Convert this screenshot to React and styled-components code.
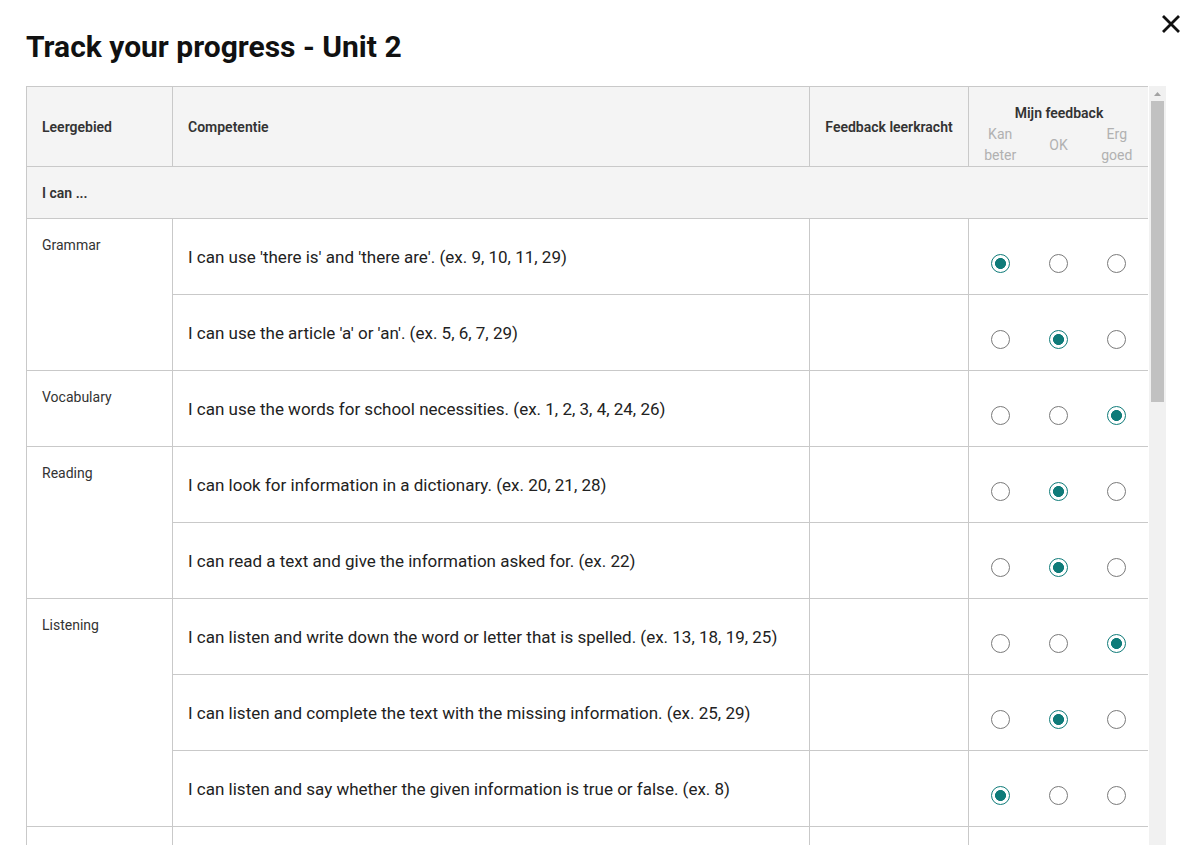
import React from 'react';
import styled, { createGlobalStyle } from 'styled-components';

const GlobalStyle = createGlobalStyle`
  html, body {
    margin: 0;
    padding: 0;
    background: #fff;
    overflow: hidden;
  }
  body {
    font-family: Roboto, "Noto Sans", Arial, sans-serif;
    color: #222;
  }
`;

const groups = [
  {
    area: 'Grammar',
    items: [
      { text: "I can use 'there is' and 'there are'. (ex. 9, 10, 11, 29)", value: 0 },
      { text: "I can use the article 'a' or 'an'. (ex. 5, 6, 7, 29)", value: 1 },
    ],
  },
  {
    area: 'Vocabulary',
    items: [{ text: 'I can use the words for school necessities. (ex. 1, 2, 3, 4, 24, 26)', value: 2 }],
  },
  {
    area: 'Reading',
    items: [
      { text: 'I can look for information in a dictionary. (ex. 20, 21, 28)', value: 1 },
      { text: 'I can read a text and give the information asked for. (ex. 22)', value: 1 },
    ],
  },
  {
    area: 'Listening',
    items: [
      { text: 'I can listen and write down the word or letter that is spelled. (ex. 13, 18, 19, 25)', value: 2 },
      { text: 'I can listen and complete the text with the missing information. (ex. 25, 29)', value: 1 },
      { text: 'I can listen and say whether the given information is true or false. (ex. 8)', value: 0 },
    ],
  },
  {
    area: 'Speaking',
    items: [
      { text: 'I can spell my name and other words. (ex. 14, 15, 16)', value: null },
      { text: 'I can ask and answer questions about my classroom. (ex. 12, 27)', value: null },
      { text: 'I can say what there is in my schoolbag. (ex. 23)', value: null },
    ],
  },
  {
    area: 'Writing',
    items: [
      { text: 'I can write a short text about my classroom. (ex. 30)', value: null },
      { text: 'I can write down a list of school necessities. (ex. 17)', value: null },
    ],
  },
];

const levels = ['Kan beter', 'OK', 'Erg goed'];

const Page = styled.div`
  position: relative;
  height: 100vh;
  box-sizing: border-box;
  padding: 30px 29px 0 26px;
  display: flex;
  flex-direction: column;
`;

const Title = styled.h1`
  margin: 0 0 22px;
  font-size: 30px;
  line-height: 34px;
  font-weight: 700;
  color: #111;
`;

const CloseButton = styled.button`
  position: absolute;
  top: 12px;
  right: 12px;
  width: 24px;
  height: 24px;
  padding: 0;
  border: 0;
  background: none;
  cursor: pointer;
  display: flex;
  align-items: center;
  justify-content: center;
`;

const Frame = styled.div`
  flex: 1;
  min-height: 0;
  display: flex;
`;

const ScrollBox = styled.div`
  flex: 1;
  overflow: hidden;
  scrollbar-width: none;
`;

const ScrollTrack = styled.div`
  width: 17px;
  margin-left: 1px;
  background: #f1f1f1;
  display: flex;
  flex-direction: column;
  align-items: center;
`;

const ScrollArrow = styled.div`
  height: 15px;
  width: 100%;
  display: flex;
  align-items: center;
  justify-content: center;
`;

const ScrollThumb = styled.div`
  width: 13px;
  height: 301px;
  background: #c1c1c1;
`;

const Table = styled.table`
  width: 1123px;
  border-collapse: collapse;
  table-layout: fixed;
  border: 1px solid #c9c9c9;
`;

const HeadCell = styled.th`
  height: 79px;
  padding: 0 15px;
  background: #f4f4f4;
  border: 1px solid #c9c9c9;
  font-size: 14px;
  font-weight: 600;
  color: #333;
  text-align: ${(p) => (p.$center ? 'center' : 'left')};
  vertical-align: middle;
`;

const FeedbackHead = styled.th`
  padding: 18px 0 0;
  background: #f4f4f4;
  border: 1px solid #c9c9c9;
  vertical-align: top;
`;

const FeedbackTitle = styled.div`
  font-size: 14px;
  line-height: 17px;
  font-weight: 600;
  color: #333;
  text-align: center;
  margin-bottom: 2px;
`;

const LevelRow = styled.div`
  display: grid;
  grid-template-columns: repeat(3, 1fr);
  align-items: center;
  padding: 0 3px 0 2px;
`;

const LevelLabel = styled.span`
  font-size: 14px;
  line-height: 21px;
  color: #b1b1b1;
  font-weight: 400;
  text-align: center;
`;

const SectionCell = styled.td`
  height: 51px;
  padding: 0 15px;
  background: #f4f4f4;
  border: 1px solid #c9c9c9;
  font-size: 14px;
  font-weight: 600;
  color: #333;
`;

const AreaCell = styled.td`
  padding: 16px 15px 0;
  border: 1px solid #c9c9c9;
  font-size: 14px;
  line-height: 20px;
  color: #333;
  vertical-align: top;
`;

const TextCell = styled.td`
  height: 75px;
  padding: 0 15px;
  border: 1px solid #c9c9c9;
  font-size: 17px;
  color: #222;
  vertical-align: middle;
`;

const EmptyCell = styled.td`
  border: 1px solid #c9c9c9;
`;

const RadioCell = styled.td`
  border: 1px solid #c9c9c9;
  padding: 13px 3px 0 2px;
  vertical-align: middle;
`;

const RadioGroup = styled.div`
  display: grid;
  grid-template-columns: repeat(3, 1fr);
  justify-items: center;
`;

const Radio = styled.input`
  appearance: none;
  margin: 0;
  width: 19px;
  height: 19px;
  border-radius: 50%;
  border: 1.5px solid #7a7a7a;
  background: #fff;
  cursor: pointer;
  box-sizing: border-box;

  &:checked {
    border: 1.5px solid #0f7b79;
    background: radial-gradient(circle, #0f7b79 0 5.2px, #fff 5.8px);
  }
`;

const CloseIcon = () => (
  <svg width="22" height="22" viewBox="0 0 22 22">
    <path d="M3 3 L19 19 M19 3 L3 19" stroke="#111" strokeWidth="2.8" />
  </svg>
);

const ArrowUp = () => (
  <svg width="7" height="4" viewBox="0 0 7 4">
    <path d="M0 4 L3.5 0 L7 4 Z" fill="#a3a3a3" />
  </svg>
);

export default function App() {
  return (
    <>
      <GlobalStyle />
      <Page>
        <CloseButton aria-label="Sluiten">
          <CloseIcon />
        </CloseButton>
        <Title>Track your progress - Unit 2</Title>
        <Frame>
          <ScrollBox>
            <Table>
              <colgroup>
                <col style={{ width: 146 }} />
                <col style={{ width: 637 }} />
                <col style={{ width: 159 }} />
                <col style={{ width: 181 }} />
              </colgroup>
              <thead>
                <tr>
                  <HeadCell>Leergebied</HeadCell>
                  <HeadCell>Competentie</HeadCell>
                  <HeadCell $center>Feedback leerkracht</HeadCell>
                  <FeedbackHead>
                    <FeedbackTitle>Mijn feedback</FeedbackTitle>
                    <LevelRow>
                      <LevelLabel>Kan<br />beter</LevelLabel>
                      <LevelLabel>OK</LevelLabel>
                      <LevelLabel>Erg<br />goed</LevelLabel>
                    </LevelRow>
                  </FeedbackHead>
                </tr>
              </thead>
              <tbody>
                <tr>
                  <SectionCell colSpan={4}>I can ...</SectionCell>
                </tr>
                {groups.map((group, gi) =>
                  group.items.map((item, ii) => (
                    <tr key={`${gi}-${ii}`}>
                      {ii === 0 && <AreaCell rowSpan={group.items.length}>{group.area}</AreaCell>}
                      <TextCell>{item.text}</TextCell>
                      <EmptyCell />
                      <RadioCell>
                        <RadioGroup>
                          {levels.map((level, li) => (
                            <Radio
                              key={level}
                              type="radio"
                              name={`fb-${gi}-${ii}`}
                              aria-label={level}
                              defaultChecked={item.value === li}
                            />
                          ))}
                        </RadioGroup>
                      </RadioCell>
                    </tr>
                  ))
                )}
              </tbody>
            </Table>
          </ScrollBox>
          <ScrollTrack>
            <ScrollArrow>
              <ArrowUp />
            </ScrollArrow>
            <ScrollThumb />
          </ScrollTrack>
        </Frame>
      </Page>
    </>
  );
}
